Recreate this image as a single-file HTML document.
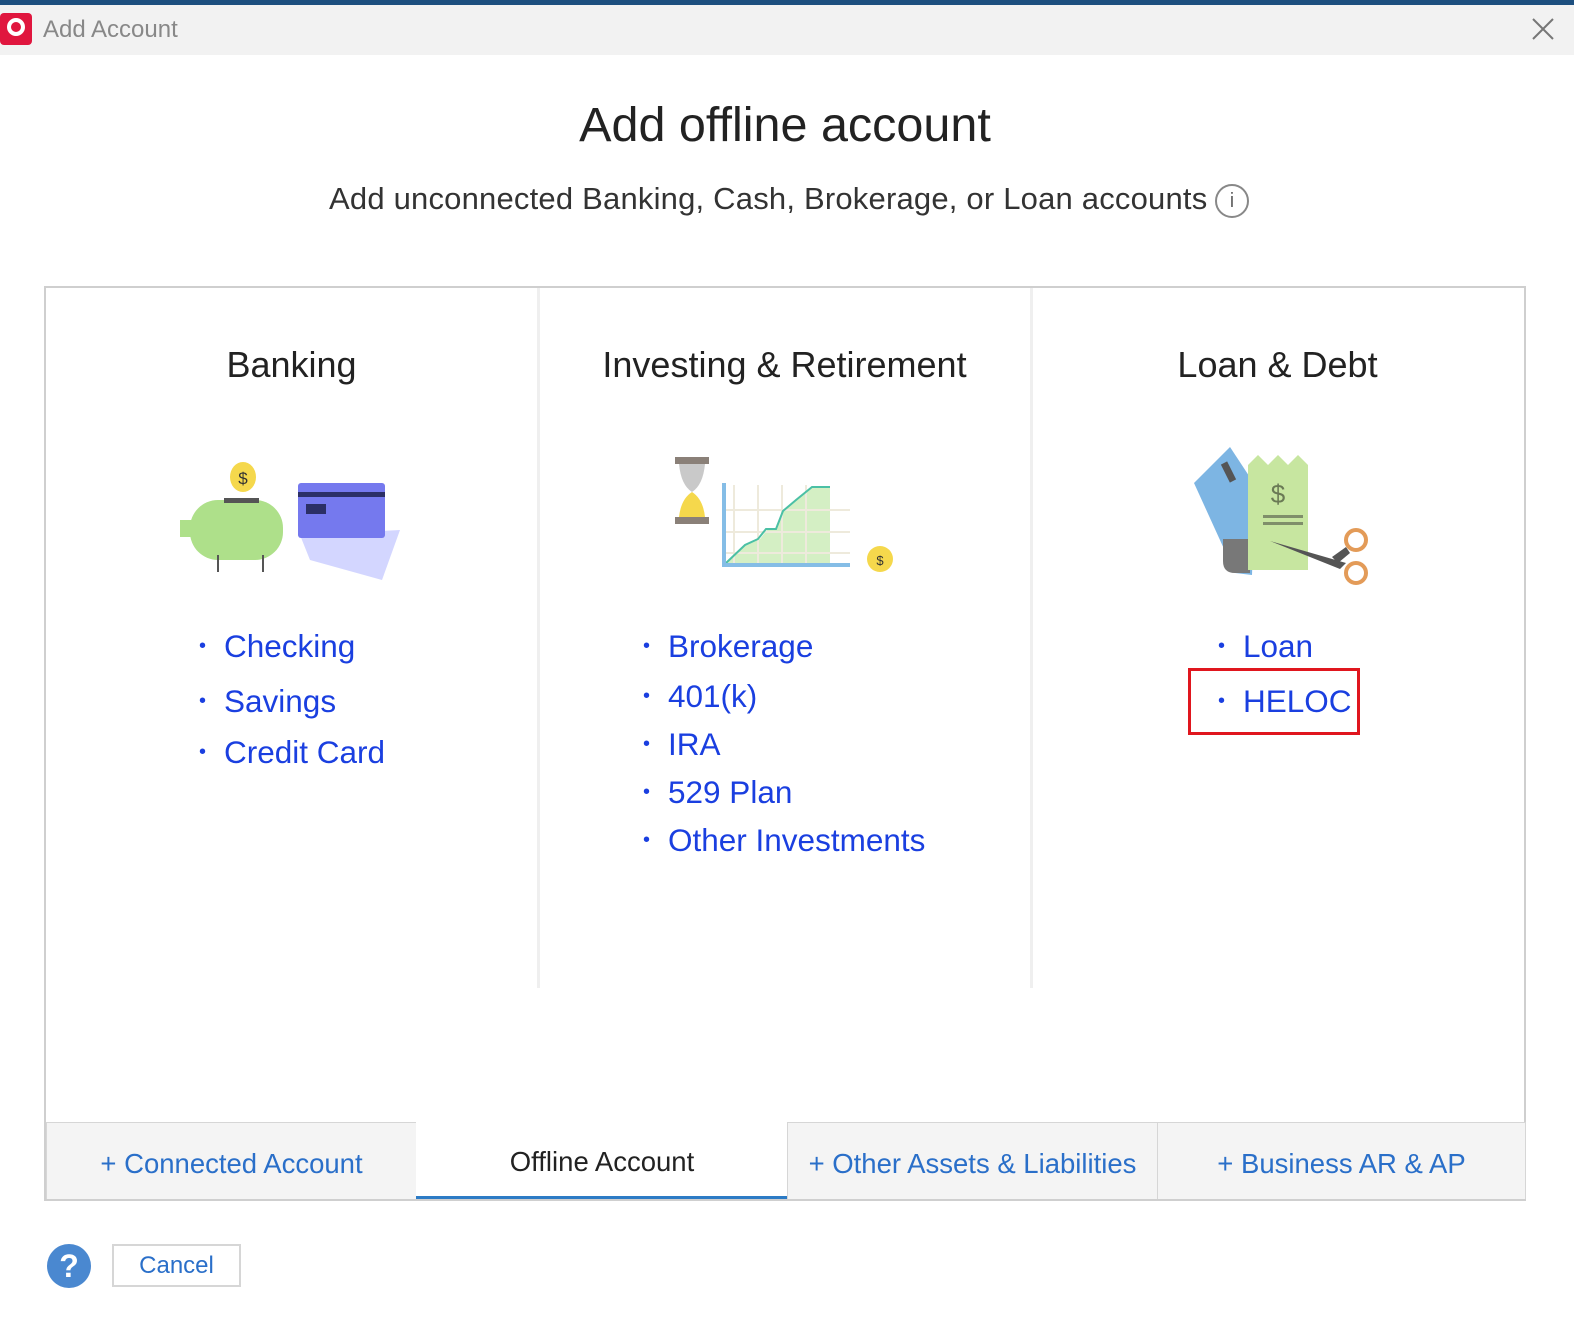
<!DOCTYPE html>
<html><head><style>
*{margin:0;padding:0;box-sizing:border-box}
body{width:1574px;height:1318px;background:#fff;font-family:"Liberation Sans",sans-serif;position:relative;overflow:hidden}
.abs{position:absolute}
.bar{left:0;top:0;width:1574px;height:5px;background:#1d4f7f}
.titlebar{left:0;top:5px;width:1574px;height:50px;background:#f2f2f2}
.c{text-align:center;white-space:nowrap}
ul{list-style:none}
li{position:absolute;font-size:31.5px;color:#1a3fe0;white-space:nowrap}
li:before{content:"•";font-size:20px;position:absolute;left:-25px;top:7px}
.tab{top:1122px;height:78px;background:#f4f4f4;border:1px solid #d6d6d6;font-size:27.5px;color:#2a6fc9;text-align:center;line-height:82px}
</style></head><body>
<div class="abs bar"></div>
<div class="abs titlebar"></div>
<div class="abs" style="left:0;top:13px;width:32px;height:32px;background:#e0163e;border-radius:4px"></div>
<div class="abs" style="left:7px;top:18px;width:18px;height:18px;border:4px solid #fff;border-radius:50%"></div>
<div class="abs" style="left:43px;top:16px;font-size:24px;color:#888">Add Account</div>
<svg class="abs" style="left:1530px;top:16px" width="26" height="26"><path d="M3 3L23 23M23 3L3 23" stroke="#777" stroke-width="2"/></svg>

<div class="abs c" style="left:0;width:1570px;top:97px;font-size:48.5px;color:#222">Add offline account</div>
<div class="abs c" style="left:329px;top:181px;font-size:31px;color:#333;letter-spacing:0.2px">Add unconnected Banking, Cash, Brokerage, or Loan accounts</div>
<div class="abs" style="left:1215px;top:184px;width:34px;height:34px;border:2px solid #888;border-radius:50%;font-size:20px;color:#666;text-align:center;line-height:30px">i</div>

<div class="abs" style="left:44px;top:286px;width:1482px;height:915px;border:2px solid #cfcfcf;border-bottom:none"></div>
<div class="abs" style="left:537px;top:288px;width:3px;height:700px;background:#efefef"></div>
<div class="abs" style="left:1030px;top:288px;width:3px;height:700px;background:#efefef"></div>

<div class="abs c" style="left:46px;width:491px;top:344px;font-size:36px;color:#222">Banking</div>
<div class="abs c" style="left:539px;width:491px;top:344px;font-size:36px;color:#222">Investing &amp; Retirement</div>
<div class="abs c" style="left:1032px;width:491px;top:344px;font-size:36px;color:#222">Loan &amp; Debt</div>

<svg class="abs" style="left:170px;top:450px" width="240" height="130">
<polygon points="130,85 230,80 212,130 140,110" fill="#d3d6ff"/>
<rect x="128" y="33" width="87" height="55" rx="3" fill="#7579ee"/>
<rect x="128" y="42" width="87" height="5" fill="#2b2f66"/>
<rect x="136" y="54" width="20" height="10" fill="#2b2f66"/>
<rect x="10" y="70" width="20" height="17" fill="#aee08a"/>
<rect x="20" y="50" width="93" height="60" rx="28" fill="#aee08a"/>
<line x1="48" y1="105" x2="48" y2="122" stroke="#555" stroke-width="2"/>
<line x1="93" y1="105" x2="93" y2="122" stroke="#555" stroke-width="2"/>
<rect x="54" y="48" width="35" height="5" fill="#555"/>
<ellipse cx="73" cy="27" rx="13" ry="15" fill="#f5d84c"/>
<text x="73" y="34" font-size="17" text-anchor="middle" fill="#333" font-family="Liberation Sans">$</text>
</svg>

<svg class="abs" style="left:670px;top:455px" width="230" height="120">
<rect x="5" y="2" width="34" height="7" fill="#8a8078"/>
<path d="M9 9H35Q33 30 22 37Q11 30 9 9Z" fill="#c9c9c9"/>
<path d="M22 37Q33 44 35 62H9Q11 44 22 37Z" fill="#f5d84c"/>
<rect x="5" y="62" width="34" height="7" fill="#8a8078"/>
<path d="M56 108L78 88L90 84L97 75L106 74L113 55L126 46L142 32H160V108Z" fill="#d4efc4"/>
<g stroke="#eeeadc" stroke-width="2"><line x1="64" y1="30" x2="64" y2="108"/><line x1="88" y1="30" x2="88" y2="108"/><line x1="112" y1="30" x2="112" y2="108"/><line x1="136" y1="30" x2="136" y2="108"/><line x1="54" y1="55" x2="180" y2="55"/><line x1="54" y1="77" x2="180" y2="77"/><line x1="54" y1="98" x2="180" y2="98"/></g>
<path d="M56 108L75 90L88 84L96 74L106 74L113 56L126 45L142 32H160" fill="none" stroke="#4bc0a5" stroke-width="2"/>
<path d="M54 28V110H180" fill="none" stroke="#85bde6" stroke-width="4"/>
<ellipse cx="210" cy="104" rx="13" ry="13" fill="#f5d84c"/>
<text x="210" y="110" font-size="13" text-anchor="middle" fill="#333" font-family="Liberation Sans">$</text>
</svg>

<svg class="abs" style="left:1180px;top:435px" width="200" height="160">
<polygon points="14,48 50,12 75,50 72,140 55,138" fill="#7db5e3"/>
<line x1="44" y1="28" x2="53" y2="46" stroke="#555" stroke-width="7"/>
<path d="M43 104H70V138H55Q43 138 43 126Z" fill="#787878"/>
<path d="M68 30L78 20L88 30L98 20L108 30L118 20L128 30V135H68Z" fill="#c7e6a0"/>
<text x="98" y="68" font-size="26" text-anchor="middle" fill="#6a7a55" font-family="Liberation Sans">$</text>
<rect x="83" y="80" width="40" height="3" fill="#7f8f6a"/><rect x="83" y="87" width="40" height="3" fill="#7f8f6a"/>
<path d="M90 106L166 128L160 134Z M152 122L166 112L170 118L158 128Z" fill="#555"/>
<circle cx="176" cy="105" r="10" fill="none" stroke="#e39b58" stroke-width="4"/>
<circle cx="176" cy="138" r="10" fill="none" stroke="#e39b58" stroke-width="4"/>
</svg>

<ul>
<li style="left:224px;top:628px">Checking</li>
<li style="left:224px;top:683px">Savings</li>
<li style="left:224px;top:734px">Credit Card</li>
<li style="left:668px;top:628px">Brokerage</li>
<li style="left:668px;top:678px">401(k)</li>
<li style="left:668px;top:726px">IRA</li>
<li style="left:668px;top:774px">529 Plan</li>
<li style="left:668px;top:822px">Other Investments</li>
<li style="left:1243px;top:628px">Loan</li>
<li style="left:1243px;top:683px">HELOC</li>
</ul>
<div class="abs" style="left:1188px;top:668px;width:172px;height:67px;border:3px solid #e0161e"></div>

<div class="abs tab" style="left:46px;width:371px">+ Connected Account</div>
<div class="abs" style="left:416px;top:1122px;width:372px;height:78px;background:#fff;font-size:27.5px;color:#222;text-align:center;line-height:80px">Offline Account</div>
<div class="abs" style="left:416px;top:1196px;width:372px;height:4px;background:#2c7bc5"></div>
<div class="abs tab" style="left:787px;width:371px">+ Other Assets &amp; Liabilities</div>
<div class="abs tab" style="left:1157px;width:369px">+ Business AR &amp; AP</div>
<div class="abs" style="left:44px;top:1199px;width:1482px;height:2px;background:#cfcfcf"></div>

<div class="abs" style="left:47px;top:1244px;width:44px;height:44px;border-radius:50%;background:#4a88d0;color:#fff;font-size:32px;font-weight:bold;text-align:center;line-height:44px">?</div>
<div class="abs" style="left:112px;top:1244px;width:129px;height:43px;border:2px solid #d6d6d6;color:#2a6fc9;font-size:24px;text-align:center;line-height:40px">Cancel</div>
</body></html>
